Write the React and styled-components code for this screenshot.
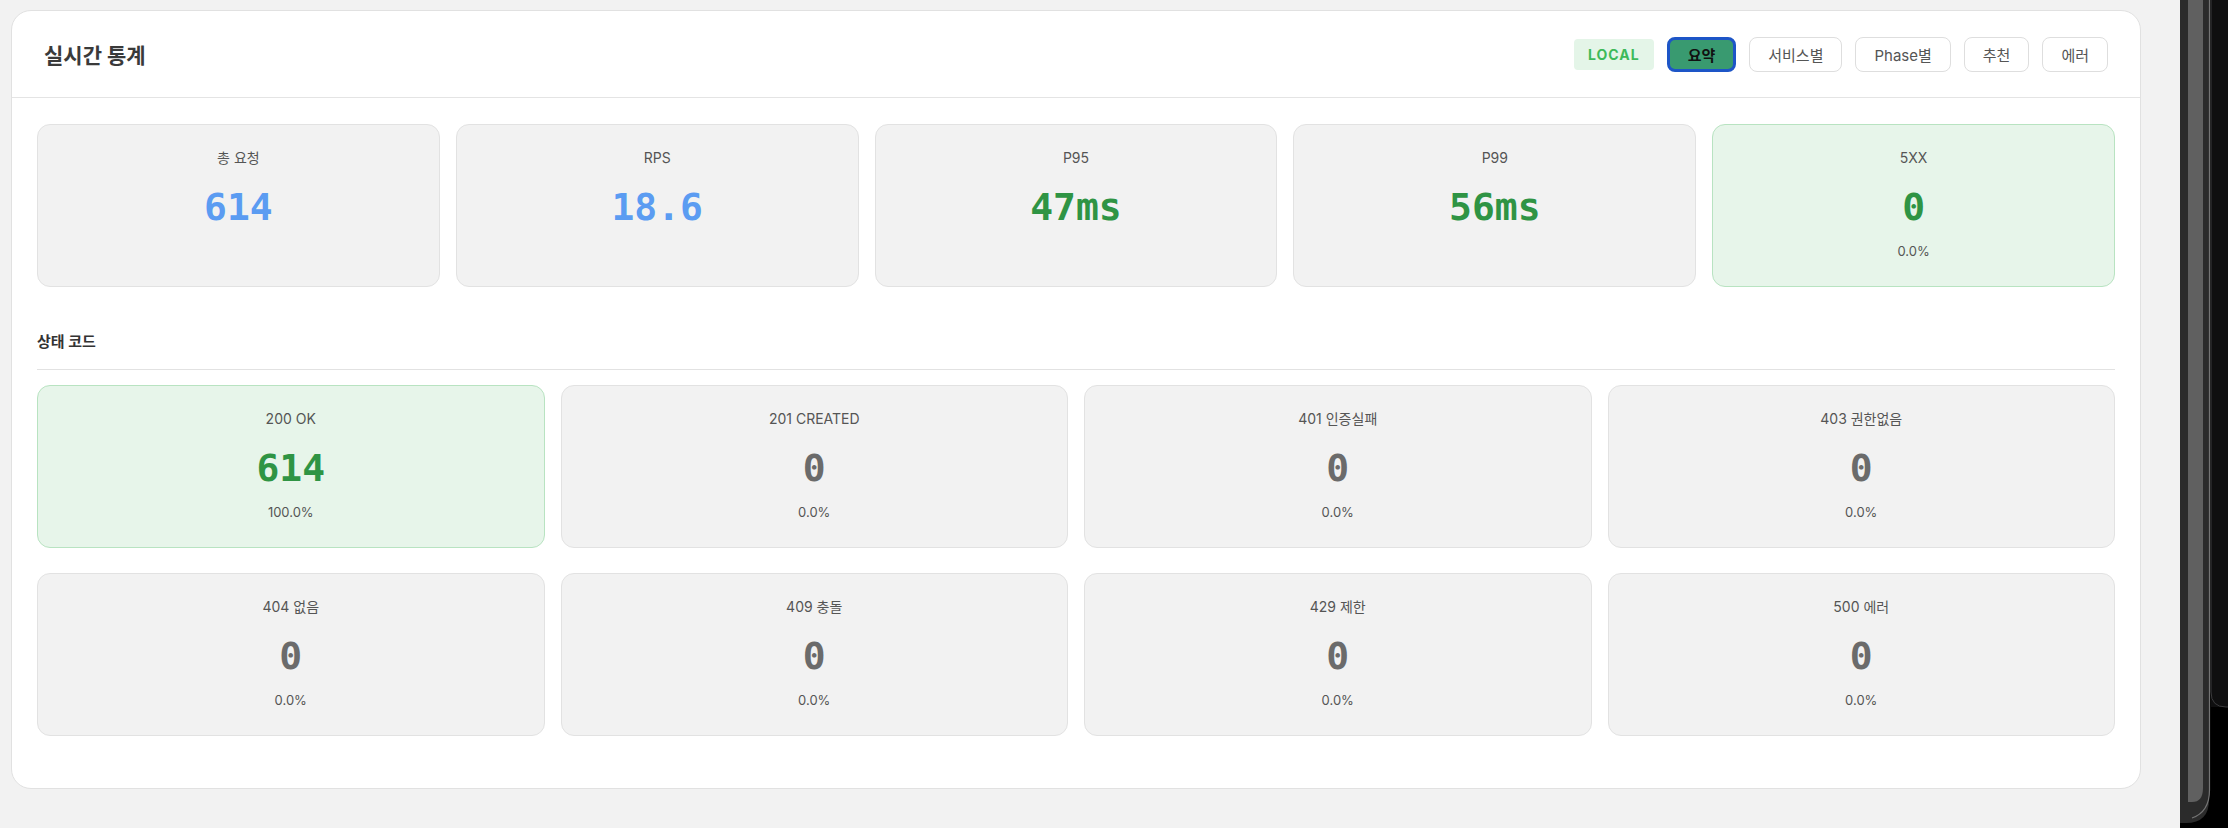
import React from "react";
import styled, { createGlobalStyle } from "styled-components";

const GlobalStyle = createGlobalStyle`
  html, body {
    margin: 0;
    padding: 0;
    background: #f2f2f2;
  }
  body {
    font-family: Inter, "Noto Sans", "Noto Sans CJK KR", sans-serif;
    color: #333;
  }
  * {
    box-sizing: border-box;
  }
`;

const TONES = {
  blue: "#5b9cf2",
  green: "#2f9444",
  gray: "#6b6b6b",
};

const summary = [
  { label: "총 요청", value: "614", tone: "blue" },
  { label: "RPS", value: "18.6", tone: "blue" },
  { label: "P95", value: "47ms", tone: "green" },
  { label: "P99", value: "56ms", tone: "green" },
  { label: "5XX", value: "0", tone: "green", sub: "0.0%", ok: true },
];

const statusCodes = [
  { label: "200 OK", value: "614", sub: "100.0%", ok: true },
  { label: "201 CREATED", value: "0", sub: "0.0%" },
  { label: "401 인증실패", value: "0", sub: "0.0%" },
  { label: "403 권한없음", value: "0", sub: "0.0%" },
  { label: "404 없음", value: "0", sub: "0.0%" },
  { label: "409 충돌", value: "0", sub: "0.0%" },
  { label: "429 제한", value: "0", sub: "0.0%" },
  { label: "500 에러", value: "0", sub: "0.0%" },
];

const tabs = ["요약", "서비스별", "Phase별", "추천", "에러"];

// dark device frame on the right edge of the screenshot
const Bezel = () => (
  <BezelWrap>
    <svg width="48" height="828" viewBox="0 0 48 828">
      <rect x="0" y="0" width="48" height="828" fill="#000" />
      <rect x="31" y="0" width="17" height="707" fill="#0f0f10" />
      <path d="M31 0 V692 Q31 707 46 707 H48" fill="none" stroke="#3a3a3c" strokeWidth="1" />
      <path d="M0 0 H29 V800 Q29 823 6 823 H0 Z" fill="#2b2b2b" />
      <path d="M29.5 0 V790 Q29.5 812 12 818" fill="none" stroke="#747474" strokeWidth="1.2" />
      <path d="M8 0 H23 V788 Q23 802 12 802 H8 Z" fill="#606060" />
    </svg>
  </BezelWrap>
);

const MetricCard = ({ label, value, sub, tone = "gray", ok }) => (
  <Card $ok={ok}>
    <CardLabel>{label}</CardLabel>
    <CardValue $tone={tone}>{value}</CardValue>
    {sub && <CardSub>{sub}</CardSub>}
  </Card>
);

const App = () => {
  return (
    <>
      <GlobalStyle />
      <Page>
        <Main>
          <Panel>
            <PanelHeader>
              <Title>실시간 통계</Title>
              <Toolbar>
                <EnvBadge>LOCAL</EnvBadge>
                {tabs.map((t, i) => (
                  <TabButton key={t} $active={i === 0}>
                    {t}
                  </TabButton>
                ))}
              </Toolbar>
            </PanelHeader>
            <PanelBody>
              <SummaryGrid>
                {summary.map((s) => (
                  <MetricCard key={s.label} {...s} />
                ))}
              </SummaryGrid>
              <SectionTitle>상태 코드</SectionTitle>
              <StatusGrid>
                {statusCodes.map((s) => (
                  <MetricCard
                    key={s.label}
                    {...s}
                    tone={s.ok ? "green" : "gray"}
                  />
                ))}
              </StatusGrid>
            </PanelBody>
          </Panel>
        </Main>
        <Bezel />
      </Page>
    </>
  );
};

const Page = styled.div`
  display: flex;
  height: 828px;
  overflow: hidden;
`;

const Main = styled.main`
  flex: 1;
  padding: 10px 39px 0 11px;
`;

const BezelWrap = styled.div`
  width: 48px;
  flex-shrink: 0;
  line-height: 0;
`;

const Panel = styled.section`
  background: #fff;
  border: 1px solid #e1e1e1;
  border-radius: 20px;
  height: 779px;
`;

const PanelHeader = styled.header`
  display: flex;
  align-items: center;
  justify-content: space-between;
  height: 87px;
  padding: 0 32px;
  border-bottom: 1px solid #e4e4e4;
`;

const Title = styled.h2`
  margin: 0;
  font-size: 21px;
  font-weight: 700;
  color: #3a3a3a;
`;

const Toolbar = styled.div`
  display: flex;
  align-items: center;
  gap: 13px;
`;

const EnvBadge = styled.span`
  display: inline-flex;
  align-items: center;
  height: 31px;
  padding: 0 14px;
  border-radius: 4px;
  background: #e4f5e8;
  color: #3dba5a;
  font-size: 14px;
  font-weight: 700;
  letter-spacing: 1px;
`;

const TabButton = styled.button`
  height: 35px;
  padding: 0 18px;
  border-radius: 8px;
  font-family: inherit;
  font-size: 15px;
  cursor: pointer;
  background: ${(p) => (p.$active ? "#399a70" : "#fff")};
  border: ${(p) => (p.$active ? "3px solid #1d55c7" : "1px solid #dedede")};
  color: ${(p) => (p.$active ? "#111" : "#555")};
  font-weight: ${(p) => (p.$active ? 600 : 400)};
`;

const PanelBody = styled.div`
  padding: 26px 25px 0;
`;

const SummaryGrid = styled.div`
  display: grid;
  grid-template-columns: repeat(5, 1fr);
  gap: 16px;
`;

const StatusGrid = styled.div`
  display: grid;
  grid-template-columns: repeat(4, 1fr);
  column-gap: 16px;
  row-gap: 25px;
`;

const SectionTitle = styled.h3`
  margin: 44px 0 15px;
  padding-bottom: 16px;
  border-bottom: 1px solid #e2e2e2;
  font-size: 15px;
  line-height: 22px;
  font-weight: 700;
  color: #333;
`;

const Card = styled.div`
  display: flex;
  flex-direction: column;
  align-items: center;
  min-height: 163px;
  padding: 23px 16px 25px;
  border-radius: 13px;
  background: ${(p) => (p.$ok ? "#e7f5ea" : "#f2f2f2")};
  border: 1px solid ${(p) => (p.$ok ? "#b8e3c1" : "#e2e2e2")};
`;

const CardLabel = styled.div`
  font-size: 14px;
  line-height: 20px;
  color: #555;
`;

const CardValue = styled.div`
  margin-top: 16px;
  font-family: "DejaVu Sans Mono", "Liberation Mono", monospace;
  font-size: 38px;
  line-height: 46px;
  font-weight: 700;
  color: ${(p) => TONES[p.$tone]};
`;

const CardSub = styled.div`
  margin-top: 12px;
  font-size: 13px;
  line-height: 18px;
  color: #555;
`;

export default App;
